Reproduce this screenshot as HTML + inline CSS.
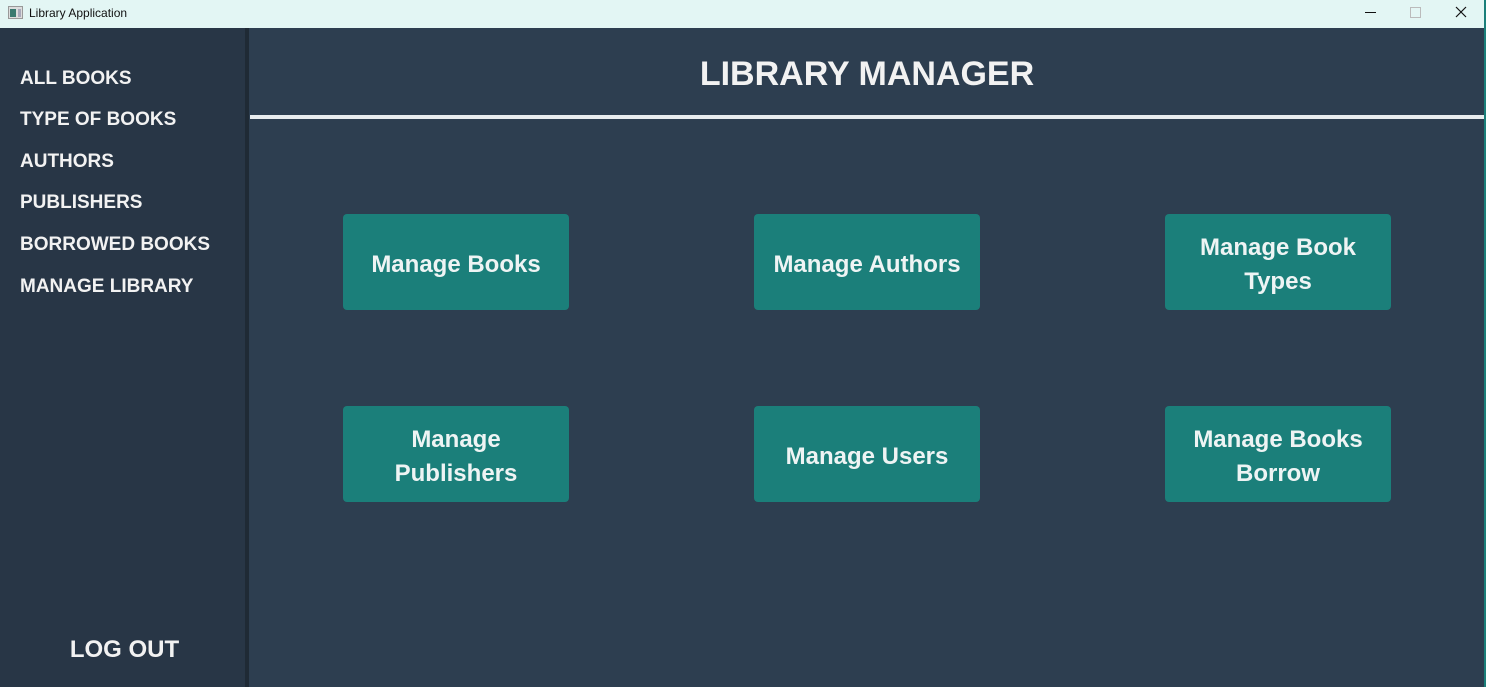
<!DOCTYPE html>
<html><head><style>
body{margin:0;width:1486px;height:687px;overflow:hidden;font-family:"Liberation Sans",sans-serif;background:#2d3e50;position:relative}
.tb{position:absolute;left:0;top:0;width:1486px;height:28px;background:#e3f6f4;font-size:12px;color:#111}
.side{position:absolute;left:0;top:28px;width:245px;height:659px;background:#283646}
.bar{position:absolute;left:245px;top:28px;width:4px;height:659px;background:#1f2a35}
.nav{position:absolute;left:20px;color:#f2f2f2;font-weight:bold;font-size:19px}
.h{position:absolute;left:250px;width:1234px;top:55px;text-align:center;color:#f2f2f2;font-weight:bold;font-size:34px}
.line{position:absolute;left:250px;top:115px;width:1234px;height:4px;background:#e8ecee}
.b{position:absolute;width:226px;height:96px;background:#1b7f7a;border-radius:4px;color:#eef4f4;font-weight:bold;font-size:24px;display:flex;align-items:center;justify-content:center;text-align:center;line-height:34px;padding-top:5px;box-sizing:border-box}
.edge{position:absolute;left:1484px;top:0;width:2px;height:687px;background:#1b7f7a}
</style></head><body>
<div class="tb"><svg style="position:absolute;left:8px;top:6px" width="15" height="13"><rect x=".5" y=".5" width="14" height="12" fill="#ddd" stroke="#999"/><rect x="2" y="3" width="6" height="8" fill="#3a7a70"/><rect x="10" y="3" width="3" height="8" fill="#aab"/></svg><span style="position:absolute;left:29px;top:6px">Library Application</span>
<div style="position:absolute;left:1365px;top:12px;width:11px;height:1px;background:#111"></div>
<div style="position:absolute;left:1410px;top:7px;width:9px;height:9px;border:1px solid #bbb"></div>
<svg style="position:absolute;left:1455px;top:6px" width="12" height="12"><path d="M1 1L11 11M11 1L1 11" stroke="#111" stroke-width="1.2"/></svg></div>
<div class="side"></div><div class="bar"></div>
<div class="nav" style="top:68px">ALL BOOKS</div>
<div class="nav" style="top:109px">TYPE OF BOOKS</div>
<div class="nav" style="top:151px">AUTHORS</div>
<div class="nav" style="top:192px">PUBLISHERS</div>
<div class="nav" style="top:234px">BORROWED BOOKS</div>
<div class="nav" style="top:276px">MANAGE LIBRARY</div>
<div class="nav" style="top:636px;left:0;width:249px;text-align:center;font-size:24px">LOG OUT</div>
<div class="h">LIBRARY MANAGER</div>
<div class="line"></div>
<div class="b" style="left:343px;top:214px">Manage Books</div>
<div class="b" style="left:754px;top:214px">Manage Authors</div>
<div class="b" style="left:1165px;top:214px">Manage Book<br>Types</div>
<div class="b" style="left:343px;top:406px">Manage<br>Publishers</div>
<div class="b" style="left:754px;top:406px">Manage Users</div>
<div class="b" style="left:1165px;top:406px">Manage Books<br>Borrow</div>
<div class="edge"></div>
</body></html>
